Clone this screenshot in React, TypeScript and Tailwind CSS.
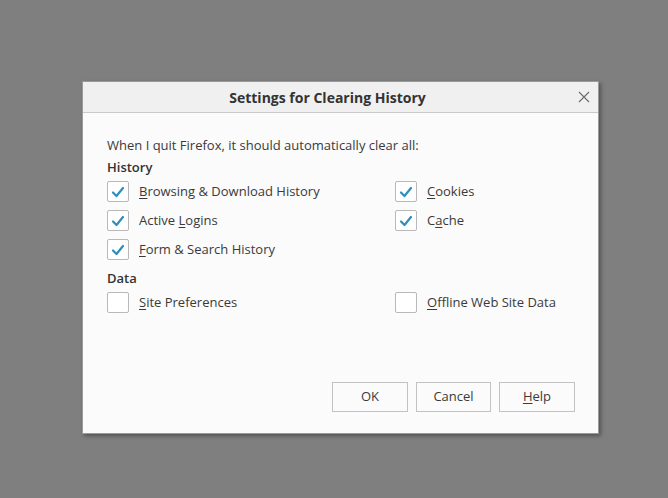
function Check({ checked }: { checked: boolean }) {
  return (
    <span className="flex h-[21px] w-[22px] shrink-0 items-center justify-center rounded-[2px] border border-[#b9b9b9] bg-white">
      {checked && (
        <svg width="14" height="12" viewBox="0 0 14 12" fill="none">
          <path d="M2 6.5 L5.5 10 L12 2" stroke="#2e8eb8" strokeWidth="2.2" strokeLinecap="round" strokeLinejoin="round" />
        </svg>
      )}
    </span>
  );
}

function Option({ checked, pre, k, post }: { checked: boolean; pre: string; k: string; post: string }) {
  return (
    <div className="flex h-[29px] items-center gap-[10px]">
      <Check checked={checked} />
      <span>
        {pre}
        <span className="underline underline-offset-2">{k}</span>
        {post}
      </span>
    </div>
  );
}

export default function App() {
  return (
    <div
      className="h-[498px] w-full bg-[#7f7f7f] pl-[82px] pt-[81px] text-[13px] text-[#3a3a3a]"
      style={{ fontFamily: '"Open Sans", "Noto Sans", sans-serif' }}
    >
      <div className="flex h-[353px] w-[517px] flex-col border border-[#9a9a9a] bg-[#fbfbfb] shadow-[2px_2px_4px_rgba(0,0,0,0.35)]">
        {/* title bar */}
        <div className="relative flex h-[31px] shrink-0 items-center justify-center border-b border-[#c9c9c9] bg-[#f0f0f0] pr-[26px]">
          <span className="text-[14px] font-bold text-[#333]">Settings for Clearing History</span>
          <svg className="absolute right-[8px] top-[9px]" width="12" height="12" viewBox="0 0 12 12">
            <path d="M1 1 L11 11 M11 1 L1 11" stroke="#6b6b6b" strokeWidth="1.1" />
          </svg>
        </div>

        <div className="flex flex-1 flex-col pl-[24px] pr-[23px] pb-[21px] pt-[23px]">
          <div className="leading-[18px]">When I quit Firefox, it should automatically clear all:</div>
          <div className="mt-[4px] font-semibold leading-[18px] text-[#333]">History</div>
          <div className="mt-[1px] grid grid-cols-[288px_1fr]">
            <Option checked pre="" k="B" post="rowsing & Download History" />
            <Option checked pre="" k="C" post="ookies" />
            <Option checked pre="Active " k="L" post="ogins" />
            <Option checked pre="C" k="a" post="che" />
            <Option checked pre="" k="F" post="orm & Search History" />
          </div>
          <div className="mt-[5px] font-semibold leading-[18px] text-[#333]">Data</div>
          <div className="mt-[1px] grid grid-cols-[288px_1fr]">
            <Option checked={false} pre="" k="S" post="ite Preferences" />
            <Option checked={false} pre="" k="O" post="ffline Web Site Data" />
          </div>

          <div className="mt-auto flex justify-end gap-[8px]">
            <button className="h-[30px] w-[76px] border border-[#c2c2c2] bg-[#fbfbfb]">OK</button>
            <button className="h-[30px] w-[75px] border border-[#c2c2c2] bg-[#fbfbfb]">Cancel</button>
            <button className="h-[30px] w-[76px] border border-[#c2c2c2] bg-[#fbfbfb]">
              <span className="underline underline-offset-2">H</span>elp
            </button>
          </div>
        </div>
      </div>
    </div>
  );
}
